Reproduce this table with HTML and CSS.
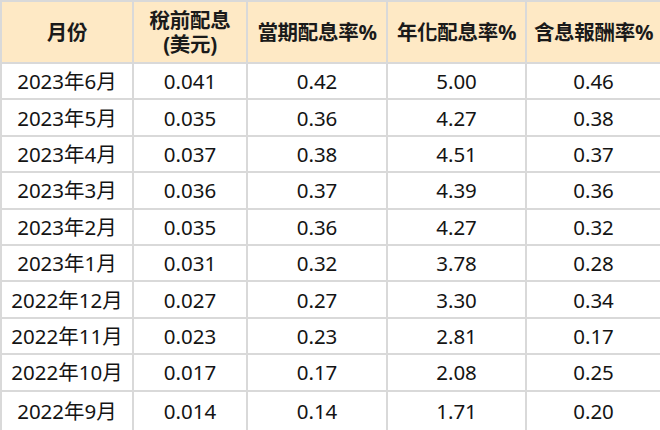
FILE: index.html
```html
<!DOCTYPE html>
<html lang="zh-Hant">
<head>
<meta charset="utf-8">
<title>配息表</title>
<link rel="stylesheet" href="styles.css">
</head>
<body>
<table class="dividend">
  <colgroup>
    <col class="c1"><col class="c2"><col class="c3"><col class="c4"><col class="c5">
  </colgroup>
  <thead>
    <tr class="head">
      <th>月份</th>
      <th>稅前配息<br>(美元)</th>
      <th>當期配息率%</th>
      <th>年化配息率%</th>
      <th>含息報酬率%</th>
    </tr>
  </thead>
  <tbody>
    <tr class="row"><td>2023年6月</td><td>0.041</td><td>0.42</td><td>5.00</td><td>0.46</td></tr>
    <tr class="row"><td>2023年5月</td><td>0.035</td><td>0.36</td><td>4.27</td><td>0.38</td></tr>
    <tr class="row"><td>2023年4月</td><td>0.037</td><td>0.38</td><td>4.51</td><td>0.37</td></tr>
    <tr class="row"><td>2023年3月</td><td>0.036</td><td>0.37</td><td>4.39</td><td>0.36</td></tr>
    <tr class="row"><td>2023年2月</td><td>0.035</td><td>0.36</td><td>4.27</td><td>0.32</td></tr>
    <tr class="row"><td>2023年1月</td><td>0.031</td><td>0.32</td><td>3.78</td><td>0.28</td></tr>
    <tr class="row"><td>2022年12月</td><td>0.027</td><td>0.27</td><td>3.30</td><td>0.34</td></tr>
    <tr class="row"><td>2022年11月</td><td>0.023</td><td>0.23</td><td>2.81</td><td>0.17</td></tr>
    <tr class="row"><td>2022年10月</td><td>0.017</td><td>0.17</td><td>2.08</td><td>0.25</td></tr>
    <tr class="row last"><td>2022年9月</td><td>0.014</td><td>0.14</td><td>1.71</td><td>0.20</td></tr>
  </tbody>
</table>
</body>
</html>
```

FILE: styles.css
```css
html, body {
  margin: 0;
  padding: 0;
  background: #ffffff;
}

.dividend {
  border-collapse: collapse;
  table-layout: fixed;
  width: 660px;
  font-family: "Noto Sans", "Noto Sans CJK TC", sans-serif;
  color: #141414;
}

.c1 { width: 132px; }
.c2 { width: 114px; }
.c3 { width: 140px; }
.c4 { width: 139px; }
.c5 { width: 135px; }

.dividend th,
.dividend td {
  border: 2px solid #d9d9d9;
  padding: 0;
  text-align: center;
  vertical-align: middle;
}

.head {
  height: 62px;
  background: #fee9c5;
}

.head th {
  font-family: "Noto Sans", "Noto Sans CJK TC", sans-serif;
  font-weight: 700;
  font-size: 20.5px;
  line-height: 24px;
  letter-spacing: -0.3px;
  color: #1a1a1a;
  background: #fee9c5;
}

.row {
  height: 36.4px;
}

.row.last {
  height: 40px;
}

.row td {
  font-size: 20.5px;
  line-height: 24px;
}
```
